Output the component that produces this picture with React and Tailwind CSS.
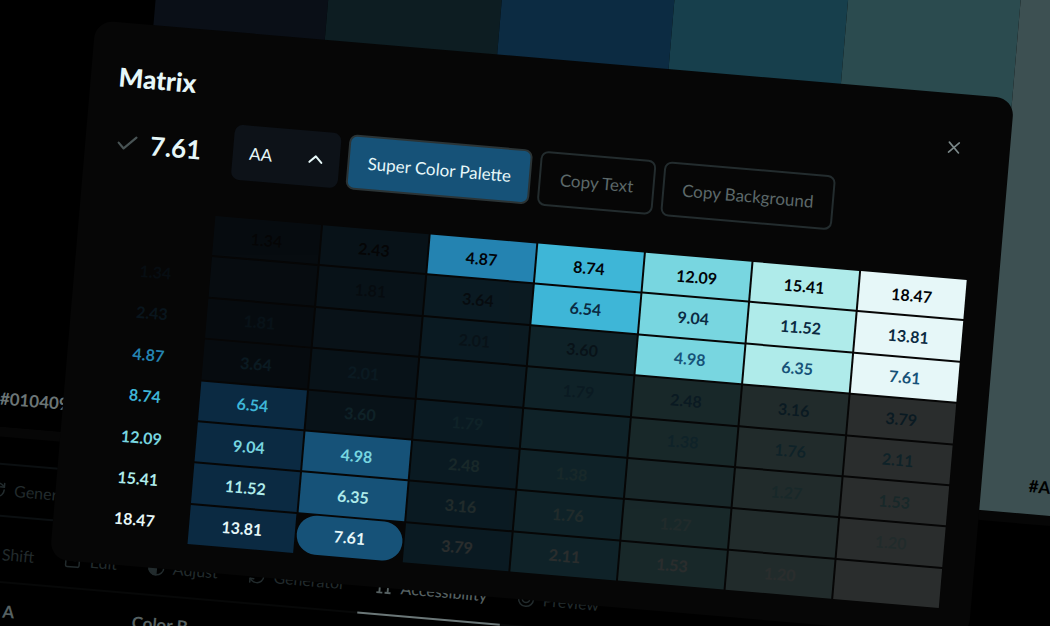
import React, { useState } from "react";
import { ArrowLeftRight, Check, ChevronUp, RefreshCw, SquareMinus, X } from "lucide-react";

const swatches = [
  { hex: "#010409", bg: "bg-[#000000]", text: "text-[#6b7576]" },
  { hex: "#0B2A42", bg: "bg-[#0a0f17]", text: "text-[#6b7576]" },
  { hex: "#165278", bg: "bg-[#0d1d22]", text: "text-[#6b7576]" },
  { hex: "#2483B1", bg: "bg-[#0c2b42]", text: "text-[#6b7576]" },
  { hex: "#3EB6D7", bg: "bg-[#173f4c]", text: "text-black" },
  { hex: "#78D6E0", bg: "bg-[#2b4b4f]", text: "text-black" },
  { hex: "#AFEBEA", bg: "bg-[#3d5052]", text: "text-black" },
];

const AdjustIcon = () => (
  <svg width="18" height="18" viewBox="0 0 24 24" fill="none" stroke="currentColor" strokeWidth="2">
    <circle cx="12" cy="12" r="10" />
    <path d="M12 2a10 10 0 0 0 0 20z" fill="currentColor" />
  </svg>
);

const PillarsIcon = () => (
  <svg width="18" height="18" viewBox="0 0 24 24" fill="none" stroke="currentColor" strokeWidth="2.5">
    <path d="M3 6l4-2v16M3 20h8M14 6l4-2v16M14 20h8" />
  </svg>
);

const PreviewIcon = () => (
  <svg width="18" height="18" viewBox="0 0 24 24" fill="none" stroke="currentColor" strokeWidth="2">
    <circle cx="12" cy="12" r="10" />
    <circle cx="12" cy="12" r="5" />
  </svg>
);

const tabs = [
  { name: "Shift", icon: <ArrowLeftRight size={18} /> },
  { name: "Edit", icon: <SquareMinus size={18} /> },
  { name: "Adjust", icon: <AdjustIcon /> },
  { name: "Generator", icon: <RefreshCw size={18} /> },
  { name: "Accessibility", icon: <PillarsIcon /> },
  { name: "Preview", icon: <PreviewIcon /> },
];

// Background of each column, darkest first
const columns = [
  "bg-[#0b2a42]",
  "bg-[#165278]",
  "bg-[#2483b1]",
  "bg-[#3eb6d7]",
  "bg-[#78d6e0]",
  "bg-[#afebea]",
  "bg-[#e6f7f8]",
];

// Text color of each row with its contrast ratio against every column
const rows = [
  { label: "", color: "text-[#010409]", values: ["1.34", "2.43", "4.87", "8.74", "12.09", "15.41", "18.47"] },
  { label: "1.34", color: "text-[#0b2a42]", values: ["", "1.81", "3.64", "6.54", "9.04", "11.52", "13.81"] },
  { label: "2.43", color: "text-[#165278]", values: ["1.81", "", "2.01", "3.60", "4.98", "6.35", "7.61"] },
  { label: "4.87", color: "text-[#2483b1]", values: ["3.64", "2.01", "", "1.79", "2.48", "3.16", "3.79"] },
  { label: "8.74", color: "text-[#3eb6d7]", values: ["6.54", "3.60", "1.79", "", "1.38", "1.76", "2.11"] },
  { label: "12.09", color: "text-[#78d6e0]", values: ["9.04", "4.98", "2.48", "1.38", "", "1.27", "1.53"] },
  { label: "15.41", color: "text-[#afebea]", values: ["11.52", "6.35", "3.16", "1.76", "1.27", "", "1.20"] },
  { label: "18.47", color: "text-[#e6f7f8]", values: ["13.81", "7.61", "3.79", "2.11", "1.53", "1.20", ""] },
];

const levels = { A: 3, AA: 4.5, AAA: 7 };

const Palette = () => (
  <div className="flex h-[515px]">
    {swatches.map((s) => (
      <div key={s.hex} className={`flex flex-1 items-end justify-center pb-4 ${s.bg}`}>
        <span className={`text-[17px] leading-6 font-bold ${s.text}`}>{s.hex}</span>
      </div>
    ))}
  </div>
);

const Toolbar = () => (
  <div>
    <div className="h-2.5 bg-[#060606]" />
    <div className="mt-[26px] mr-[190px] flex h-[54px] items-center border-y-2 border-[#0b0f11] pl-12">
      <button className="flex items-center gap-2 text-base text-[#222b2d]">
        <RefreshCw size={18} />
        Generate
      </button>
    </div>
    <nav className="mt-2.5 mr-[190px] flex border-b-2 border-[#070808] pl-[26px]">
      {tabs.map(({ name, icon }) => (
        <button
          key={name}
          className={`-mb-0.5 flex h-14 items-center gap-2 border-b-2 px-[15px] text-base ${
            name === "Accessibility"
              ? "border-[#6b7778] font-medium text-[#566162]"
              : "border-transparent text-[#222b2d]"
          }`}
        >
          {icon}
          {name}
        </button>
      ))}
    </nav>
    <div className="flex pt-4 pl-7 text-[17px] leading-6 font-bold text-[#566162]">
      <span className="w-[174px]">Color A</span>
      <span>Color B</span>
    </div>
  </div>
);

const MatrixDialog = () => {
  const [level, setLevel] = useState("AA");
  const [selected, setSelected] = useState({ row: 7, col: 1 });

  const passes = (value) => Number(value) >= levels[level];

  return (
    <div
      role="dialog"
      aria-labelledby="matrix-title"
      className="absolute top-[102px] right-[171px] left-[115px] rounded-[18px] bg-[#060606] pt-[38px] pr-[30px] pb-[25px] pl-[26px]"
    >
      <div className="flex items-center justify-between pr-4">
        <h2 id="matrix-title" className="pl-0.5 text-[26px] leading-8 font-black text-[#e6f7f8]">
          Matrix
        </h2>
        <button aria-label="Close" className="text-[#7b8889]">
          <X size={20} />
        </button>
      </div>

      <div className="mt-[22px] flex items-center gap-2">
        <div className="mr-6 flex items-center gap-2.5 pl-[3px]">
          <Check size={26} strokeWidth={2} className="text-[#485354]" />
          <span className="text-[26px] leading-8 font-bold text-[#e6f7f8]">
            {rows[selected.row].values[selected.col]}
          </span>
        </div>

        <div className="relative">
          <select
            aria-label="Level"
            value={level}
            onChange={(e) => setLevel(e.target.value)}
            className="h-[55px] w-[107px] appearance-none rounded-lg bg-[#0d1218] px-4 text-[17px] text-[#e6f7f8]"
          >
            {Object.keys(levels).map((l) => (
              <option key={l}>{l}</option>
            ))}
          </select>
          <ChevronUp size={24} className="pointer-events-none absolute top-4 right-3 text-[#e6f7f8]" />
        </div>

        <button className="h-[55px] rounded-lg border-2 border-[#2b3436] bg-[#165278] px-[18px] text-[17px] text-[#e6f7f8]">
          Super Color Palette
        </button>
        <button className="h-[55px] rounded-lg border-2 border-[#232c2e] px-[19px] text-[17px] text-[#5c6869]">
          Copy Text
        </button>
        <button className="h-[55px] rounded-lg border-2 border-[#232c2e] px-[18px] text-[17px] text-[#5c6869]">
          Copy Background
        </button>
      </div>

      <table className="mt-9 h-[333px] w-full table-fixed border-separate border-spacing-0.5 text-base leading-6 font-bold">
        <tbody>
          {rows.map((row, r) => (
            <tr key={r}>
              <th
                scope="row"
                className={`p-0 font-bold ${row.color} ${passes(row.label) ? "" : "opacity-20"}`}
              >
                {row.label}
              </th>
              {row.values.map((value, c) => (
                <td key={c} className={`p-0 ${passes(value) ? "" : "opacity-16"}`}>
                  <button
                    onClick={() => value && setSelected({ row: r, col: c })}
                    className={`block h-full min-h-[39px] w-full ${columns[c]} ${row.color} ${
                      selected.row === r && selected.col === c ? "rounded-full" : ""
                    }`}
                  >
                    {value}
                  </button>
                </td>
              ))}
            </tr>
          ))}
        </tbody>
      </table>
    </div>
  );
};

export default function App() {
  return (
    <main className="h-screen overflow-hidden bg-black font-['Lato','Open_Sans',sans-serif]">
      <div className="relative -mt-[90px] -ml-[18px] w-[115%] origin-[18px_90px] rotate-[4.87deg]">
        <Palette />
        <Toolbar />
        <MatrixDialog />
      </div>
    </main>
  );
}
